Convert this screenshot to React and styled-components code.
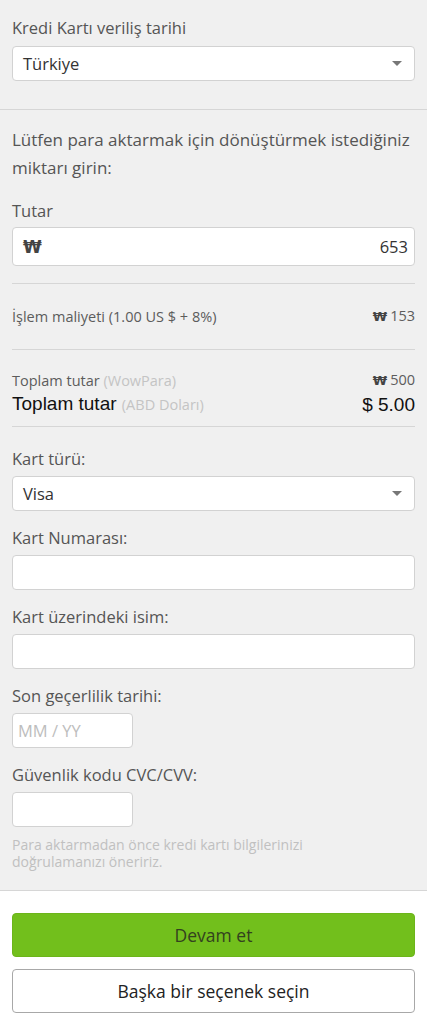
import React from 'react';
import styled, { createGlobalStyle } from 'styled-components';

const GlobalStyle = createGlobalStyle`
  body {
    margin: 0;
    background: #f0f0f0;
    font-family: 'Open Sans', 'Noto Sans', sans-serif;
    color: #555;
  }
  * { box-sizing: border-box; }
`;

const Page = styled.main`
  width: 427px;
  min-height: 1024px;
  display: flex;
  flex-direction: column;
`;

const Section = styled.section`
  padding: ${(p) => p.$pad || '18px 12px 28px'};
  display: flex;
  flex-direction: column;
  gap: ${(p) => p.$gap || '0'};
`;

const Divider = styled.hr`
  margin: ${(p) => p.$margin || '0'};
  border: 0;
  border-top: 1px solid #d6d6d6;
  height: 0;
`;

const Label = styled.label`
  display: block;
  font-size: 16.5px;
  line-height: 20px;
  color: #555;
  margin-bottom: ${(p) => p.$mb || '7px'};
`;

const Field = styled.div`
  display: flex;
  flex-direction: column;
`;

const Box = styled.div`
  height: ${(p) => p.$h || '35px'};
  width: ${(p) => p.$w || '100%'};
  background: #fff;
  border: 1px solid #d2d2d2;
  border-radius: 4px;
  display: flex;
  align-items: center;
  justify-content: space-between;
  padding: ${(p) => p.$pad || '0 10px'};
  font-size: 16.5px;
  color: #333;
`;

const Placeholder = styled.span`
  color: #bdbdbd;
  font-size: 16.5px;
  margin-left: -5px;
`;

const Caret = styled.span`
  width: 0;
  height: 0;
  border-left: 5px solid transparent;
  border-right: 5px solid transparent;
  border-top: 5px solid #777;
  margin-right: 2px;
`;

const Won = styled.span`
  font-family: 'DejaVu Sans', sans-serif;
  font-weight: 700;
  font-size: ${(p) => p.$size || '13px'};
  color: #444;
  letter-spacing: -1px;
  margin-right: ${(p) => p.$mr || '4px'};
`;

const Intro = styled.p`
  margin: 0 0 19px;
  font-size: 17px;
  line-height: 28px;
  color: #555;
`;

const Row = styled.div`
  display: flex;
  justify-content: space-between;
  align-items: center;
  font-family: ${(p) => (p.$big ? "'Liberation Sans', Arial, sans-serif" : 'inherit')};
  font-size: ${(p) => (p.$big ? '19px' : '14.5px')};
  line-height: ${(p) => (p.$big ? '26px' : '20px')};
  color: ${(p) => (p.$big ? '#111' : '#5c5c5c')};
`;

const Muted = styled.span`
  color: #c4c4c4;
  font-family: 'Open Sans', sans-serif;
  font-size: 14.5px;
`;

const Help = styled.p`
  margin: 9px 0 0;
  max-width: 330px;
  font-size: 14px;
  line-height: 17px;
  color: #c0c0c0;
`;

const Footer = styled.footer`
  background: #fff;
  border-top: 1px solid #d6d6d6;
  padding: 22px 12px 11px;
  display: flex;
  flex-direction: column;
  gap: 12px;
  flex: 1;
`;

const Button = styled.button`
  height: 44px;
  width: 100%;
  border-radius: 4px;
  font-family: inherit;
  font-size: 17.5px;
  cursor: pointer;
  background: ${(p) => (p.$primary ? '#72bf1c' : '#fff')};
  color: ${(p) => (p.$primary ? '#33411f' : '#222')};
  border: 1px solid ${(p) => (p.$primary ? '#6cb51a' : '#a8a8a8')};
`;

const App = () => {
  return (
    <Page>
      <GlobalStyle />
      <Section>
        <Label $mb="8px">Kredi Kartı veriliş tarihi</Label>
        <Box>
          Türkiye
          <Caret />
        </Box>
      </Section>
      <Divider />
      <Section $pad="16px 12px 0">
        <Intro>Lütfen para aktarmak için dönüştürmek istediğiniz miktarı girin:</Intro>
        <Label $mb="6px">Tutar</Label>
        <Box $h="39px" $pad="0 6px 0 10px">
          <Won $size="17px">₩</Won>
          653
        </Box>
        <Divider $margin="17px 0 0" />
        <Row style={{ padding: '22px 0' }}>
          <span>İşlem maliyeti (1.00 US $ + 8%)</span>
          <span><Won>₩</Won>153</span>
        </Row>
        <Divider />
        <Row style={{ paddingTop: '20px' }}>
          <span>Toplam tutar <Muted>(WowPara)</Muted></span>
          <span><Won>₩</Won>500</span>
        </Row>
        <Row $big style={{ paddingBottom: '8px' }}>
          <span>Toplam tutar <Muted>(ABD Doları)</Muted></span>
          <span>$ 5.00</span>
        </Row>
        <Divider />
      </Section>
      <Section $pad="22px 12px 20px" $gap="17px">
        <Field>
          <Label>Kart türü:</Label>
          <Box>
            Visa
            <Caret />
          </Box>
        </Field>
        <Field>
          <Label>Kart Numarası:</Label>
          <Box />
        </Field>
        <Field>
          <Label>Kart üzerindeki isim:</Label>
          <Box />
        </Field>
        <Field>
          <Label>Son geçerlilik tarihi:</Label>
          <Box $w="121px">
            <Placeholder>MM / YY</Placeholder>
          </Box>
        </Field>
        <Field>
          <Label>Güvenlik kodu CVC/CVV:</Label>
          <Box $w="121px" />
          <Help>Para aktarmadan önce kredi kartı bilgilerinizi doğrulamanızı öneririz.</Help>
        </Field>
      </Section>
      <Footer>
        <Button $primary>Devam et</Button>
        <Button>Başka bir seçenek seçin</Button>
      </Footer>
    </Page>
  );
};

export default App;
